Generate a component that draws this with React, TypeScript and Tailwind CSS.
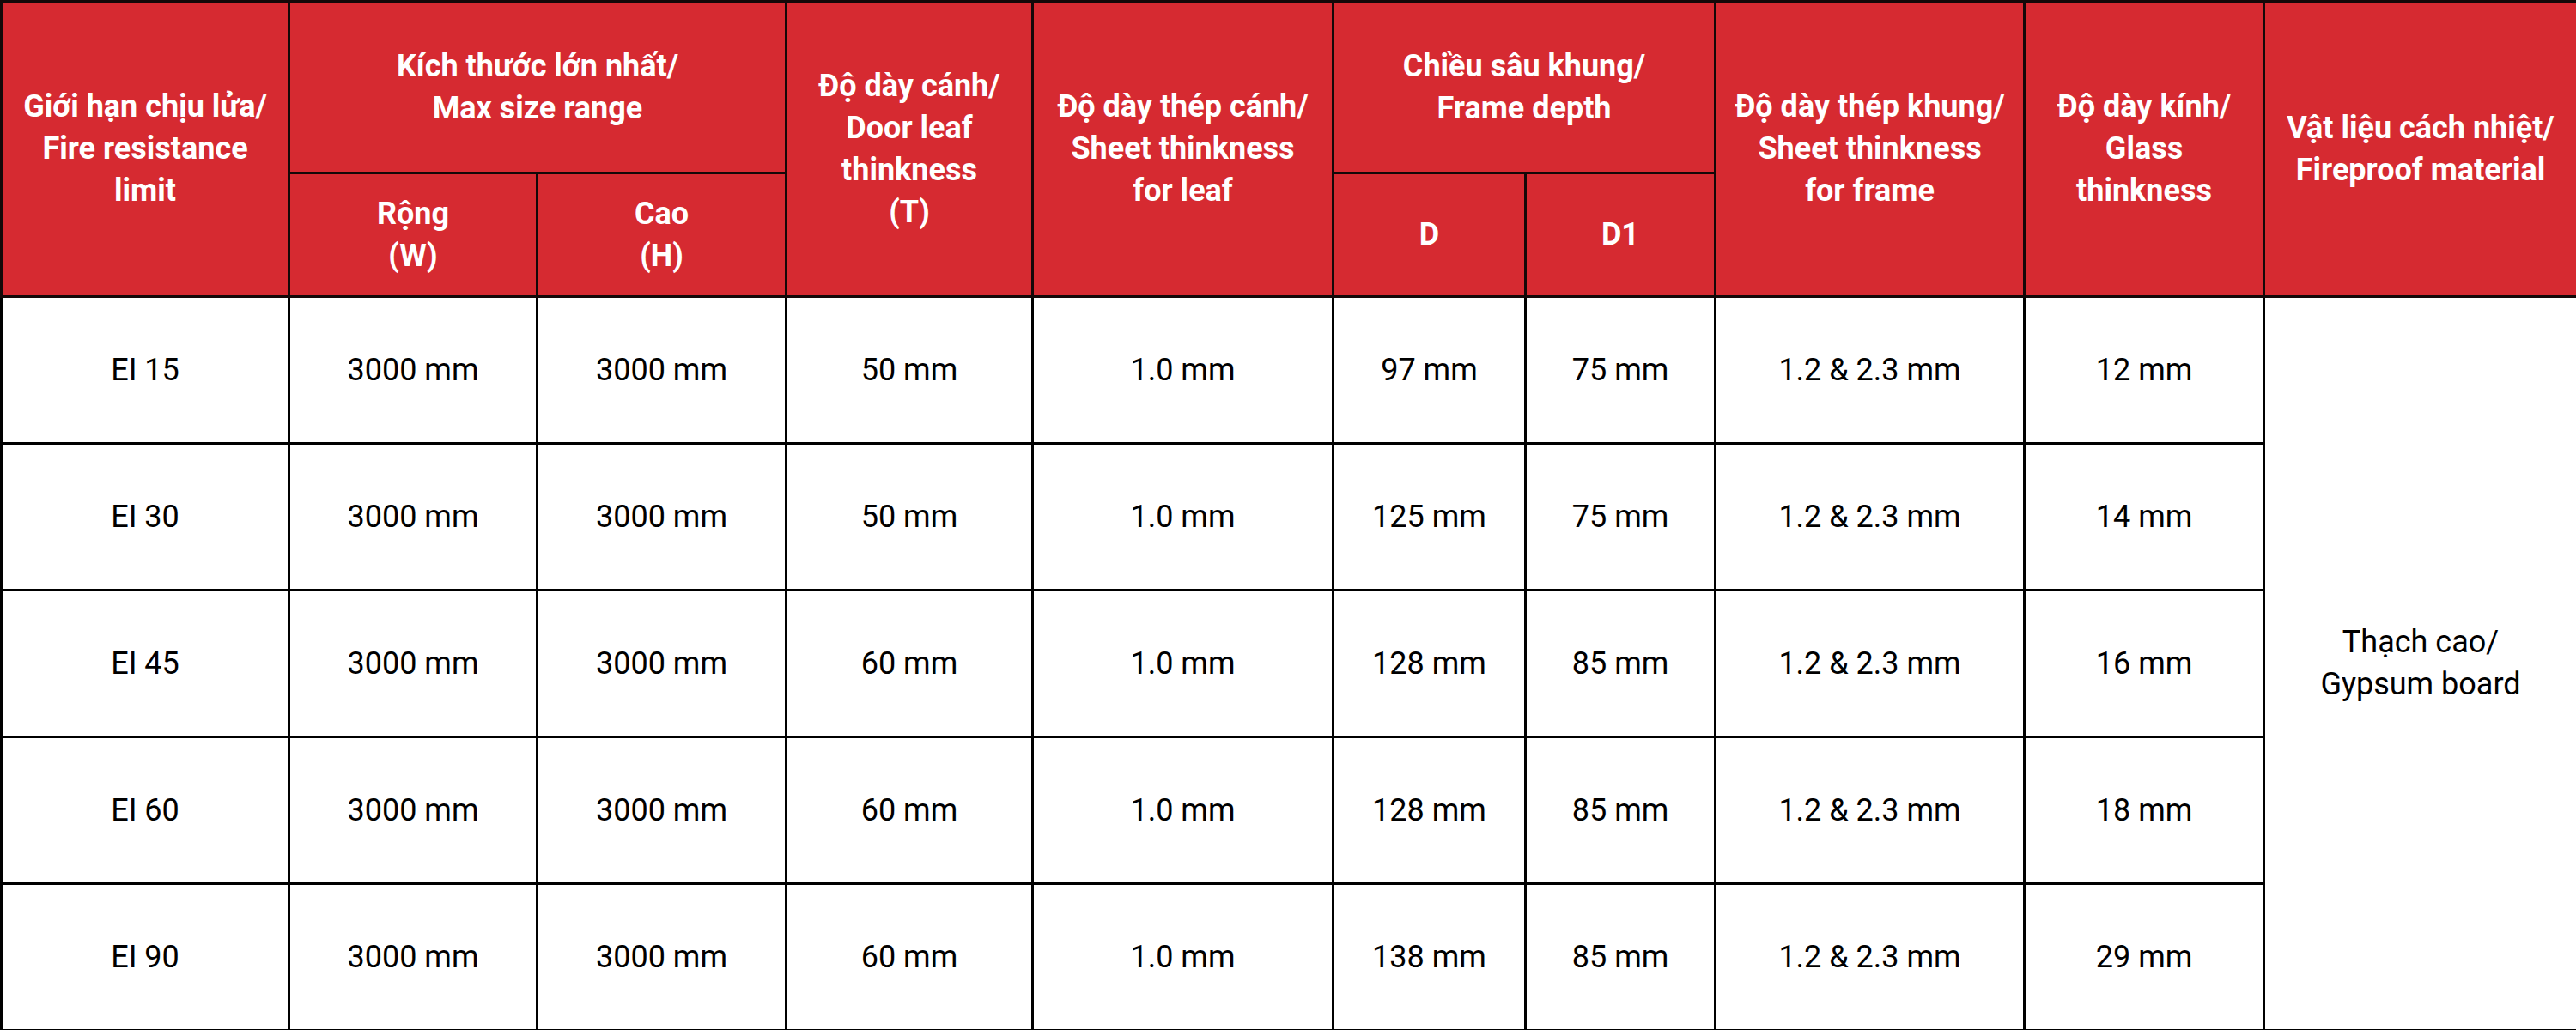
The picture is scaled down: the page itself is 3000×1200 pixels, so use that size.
import React from 'react';

const colWidths = [335, 289, 290, 287, 350, 224, 221, 360, 279, 365];

const rows = [
  ['EI 15', '3000 mm', '3000 mm', '50 mm', '1.0 mm', '97 mm', '75 mm', '1.2 & 2.3 mm', '12 mm'],
  ['EI 30', '3000 mm', '3000 mm', '50 mm', '1.0 mm', '125 mm', '75 mm', '1.2 & 2.3 mm', '14 mm'],
  ['EI 45', '3000 mm', '3000 mm', '60 mm', '1.0 mm', '128 mm', '85 mm', '1.2 & 2.3 mm', '16 mm'],
  ['EI 60', '3000 mm', '3000 mm', '60 mm', '1.0 mm', '128 mm', '85 mm', '1.2 & 2.3 mm', '18 mm'],
  ['EI 90', '3000 mm', '3000 mm', '60 mm', '1.0 mm', '138 mm', '85 mm', '1.2 & 2.3 mm', '29 mm'],
];

function Lines({ lines }: { lines: string[] }) {
  return (
    <>
      {lines.map((line, i) => (
        <div key={i} className="whitespace-nowrap">
          {line}
        </div>
      ))}
    </>
  );
}

function Th({ lines, rowSpan, colSpan }: { lines: string[]; rowSpan?: number; colSpan?: number }) {
  return (
    <th
      rowSpan={rowSpan}
      colSpan={colSpan}
      className="border-[3px] border-[#140808] bg-[#d62a31] text-white font-bold text-[36px] leading-[49px] text-center align-middle p-0"
    >
      <Lines lines={lines} />
    </th>
  );
}

export default function App() {
  return (
    <div className="w-[3000px] h-[1200px] bg-white" style={{ fontFamily: 'Roboto, "Noto Sans", sans-serif' }}>
      <table className="table-fixed border-collapse w-[3000px]">
        <colgroup>
          {colWidths.map((w, i) => (
            <col key={i} style={{ width: w }} />
          ))}
        </colgroup>
        <thead>
          <tr className="h-[200px]">
            <Th rowSpan={2} lines={['Giới hạn chịu lửa/', 'Fire resistance', 'limit']} />
            <Th colSpan={2} lines={['Kích thước lớn nhất/', 'Max size range']} />
            <Th rowSpan={2} lines={['Độ dày cánh/', 'Door leaf', 'thinkness', '(T)']} />
            <Th rowSpan={2} lines={['Độ dày thép cánh/', 'Sheet thinkness', 'for leaf']} />
            <Th colSpan={2} lines={['Chiều sâu khung/', 'Frame depth']} />
            <Th rowSpan={2} lines={['Độ dày thép khung/', 'Sheet thinkness', 'for frame']} />
            <Th rowSpan={2} lines={['Độ dày kính/', 'Glass', 'thinkness']} />
            <Th rowSpan={2} lines={['Vật liệu cách nhiệt/', 'Fireproof material']} />
          </tr>
          <tr className="h-[144px]">
            <Th lines={['Rộng', '(W)']} />
            <Th lines={['Cao', '(H)']} />
            <Th lines={['D']} />
            <Th lines={['D1']} />
          </tr>
        </thead>
        <tbody>
          {rows.map((row, r) => (
            <tr key={r} className="h-[171px]">
              {row.map((cell, c) => (
                <td
                  key={c}
                  className="border-[3px] border-black text-black text-[36px] leading-[49px] text-center align-middle p-0 whitespace-nowrap"
                >
                  {cell}
                </td>
              ))}
              {r === 0 && (
                <td
                  rowSpan={5}
                  className="border-[3px] border-black text-black text-[36px] leading-[49px] text-center align-middle p-0"
                >
                  <Lines lines={['Thạch cao/', 'Gypsum board']} />
                </td>
              )}
            </tr>
          ))}
        </tbody>
      </table>
    </div>
  );
}
